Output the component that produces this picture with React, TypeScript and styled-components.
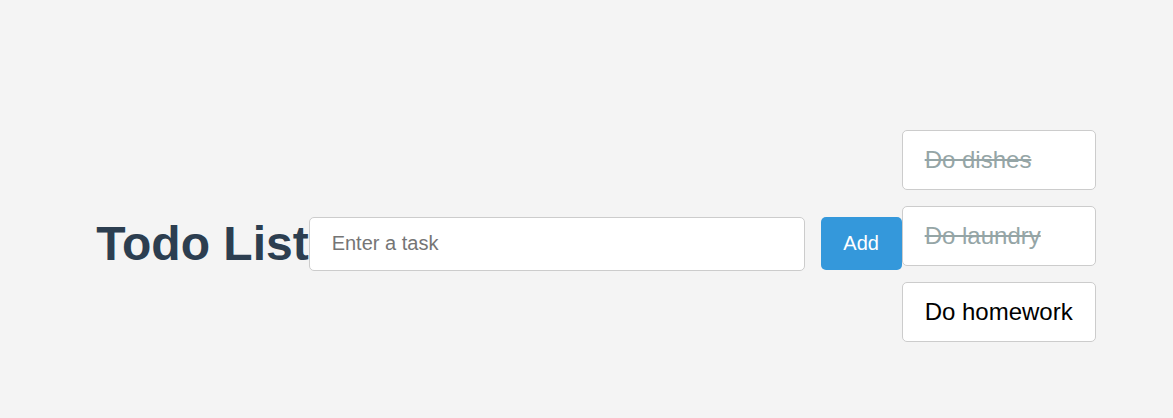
import React, { useState } from 'react';
import styled, { createGlobalStyle } from 'styled-components';

type Todo = {
  id: number;
  text: string;
  done: boolean;
};

const initialTodos: Todo[] = [
  { id: 1, text: 'Do dishes', done: true },
  { id: 2, text: 'Do laundry', done: true },
  { id: 3, text: 'Do homework', done: false },
];

const App: React.FC = () => {
  const [todos, setTodos] = useState<Todo[]>(initialTodos);
  const [task, setTask] = useState('');

  const addTodo = () => {
    if (!task.trim()) return;
    setTodos([...todos, { id: Date.now(), text: task.trim(), done: false }]);
    setTask('');
  };

  const toggle = (id: number) => {
    setTodos(todos.map((t) => (t.id === id ? { ...t, done: !t.done } : t)));
  };

  return (
    <Page>
      <GlobalStyle />
      <Row>
        <Title>Todo List</Title>
        <TaskInput
          placeholder="Enter a task"
          value={task}
          onChange={(e) => setTask(e.target.value)}
          onKeyDown={(e) => e.key === 'Enter' && addTodo()}
        />
        <AddButton onClick={addTodo}>Add</AddButton>
        <List>
          {todos.map((todo) => (
            <Item key={todo.id} done={todo.done} onClick={() => toggle(todo.id)}>
              {todo.text}
            </Item>
          ))}
        </List>
      </Row>
    </Page>
  );
};

export default App;

const GlobalStyle = createGlobalStyle`
  * {
    box-sizing: border-box;
  }
  body {
    margin: 0;
    background: #f4f4f4;
    font-family: "Liberation Sans", Arial, sans-serif;
  }
`;

const Page = styled.div`
  display: flex;
  justify-content: center;
  align-items: center;
  height: 418px;
  padding: 69px 0 0 19px;
  overflow: hidden;
`;

const Row = styled.div`
  display: flex;
  align-items: center;
`;

const Title = styled.h1`
  margin: 0;
  font-size: 48px;
  font-weight: bold;
  color: #2c3e50;
  white-space: nowrap;
`;

const TaskInput = styled.input`
  width: 496px;
  height: 54px;
  padding: 0 22px;
  margin-right: 16px;
  border: 1px solid #ccc;
  border-radius: 5px;
  background: #fff;
  font-family: inherit;
  font-size: 20px;
  color: #333;
  outline: none;

  &::placeholder {
    color: #757575;
  }
`;

const AddButton = styled.button`
  width: 81px;
  height: 53px;
  padding: 0;
  border: none;
  border-radius: 5px;
  background: #3498db;
  color: #fff;
  font-family: inherit;
  font-size: 20px;
  cursor: pointer;
`;

const List = styled.ul`
  display: flex;
  flex-direction: column;
  margin: 0;
  padding: 0;
  list-style: none;
`;

const Item = styled.li<{ done: boolean }>`
  margin-bottom: 16px;
  padding: 15px 22px;
  border: 1px solid #ccc;
  border-radius: 5px;
  background: #fff;
  font-size: 24px;
  white-space: nowrap;
  cursor: pointer;
  color: ${({ done }) => (done ? '#95a5a6' : '#000')};
  text-decoration: ${({ done }) => (done ? 'line-through' : 'none')};
`;
